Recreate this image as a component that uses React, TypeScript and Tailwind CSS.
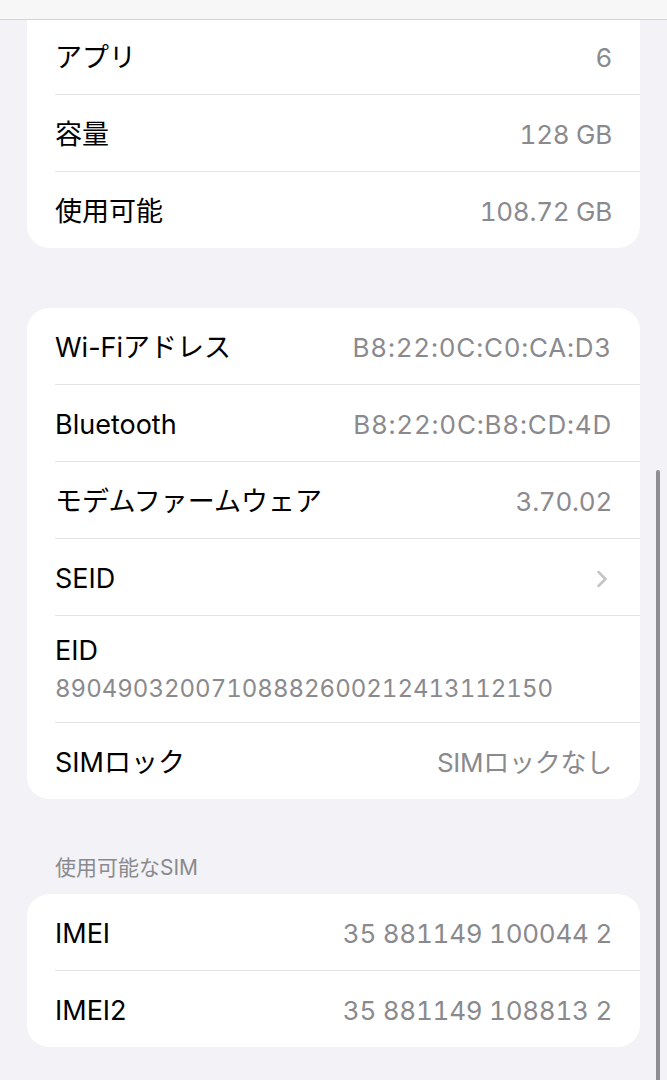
import { ChevronRight } from "lucide-react";

type Row = { label: string; value?: string; chevron?: boolean; mac?: boolean };

const storage: Row[] = [
  { label: "アプリ", value: "6" },
  { label: "容量", value: "128 GB" },
  { label: "使用可能", value: "108.72 GB" },
];

const network: Row[] = [
  { label: "Wi-Fiアドレス", value: "B8:22:0C:C0:CA:D3", mac: true },
  { label: "Bluetooth", value: "B8:22:0C:B8:CD:4D", mac: true },
  { label: "モデムファームウェア", value: "3.70.02" },
  { label: "SEID", chevron: true },
];

const sim: Row[] = [
  { label: "IMEI", value: "35 881149 100044 2" },
  { label: "IMEI2", value: "35 881149 108813 2" },
];

function Divider() {
  return <div className="ml-[28px] h-px bg-[#e3e3e6]" />;
}

function InfoRow({ row }: { row: Row }) {
  return (
    <div className="flex h-[76px] items-center justify-between pl-[28px] pr-[28px] pt-[3px]">
      <span className="text-[27px] leading-[34px] text-black">{row.label}</span>
      {row.chevron ? (
        <ChevronRight className="h-7 w-7 -mr-1 text-[#c4c4c7]" strokeWidth={2.2} />
      ) : (
        <span
          className={
            row.mac
              ? "text-[26px] leading-[34px] tracking-[0.03em] text-[#8a8a8e] tabular-nums"
              : "text-[26px] leading-[34px] tracking-[-0.01em] text-[#8a8a8e] tabular-nums"
          }
        >
          {row.value}
        </span>
      )}
    </div>
  );
}

function Group({ rows }: { rows: Row[] }) {
  return (
    <>
      {rows.map((r, i) => (
        <div key={r.label}>
          {i > 0 && <Divider />}
          <InfoRow row={r} />
        </div>
      ))}
    </>
  );
}

function App() {
  return (
    <div
      className="relative h-[1080px] w-full overflow-hidden bg-[#f2f2f7]"
      style={{ fontFamily: '"Inter", "Noto Sans CJK JP", sans-serif' }}
    >
      <div className="absolute inset-x-0 top-0 z-10 h-5 border-b border-[#d4d4d8] bg-[#f7f7f8]" />

      <div className="mx-[27px] -mt-[2px] rounded-b-[22px] bg-white pt-[20px]">
        <Group rows={storage} />
      </div>

      <div className="mx-[27px] mt-[60px] rounded-[22px] bg-white">
        <Group rows={network} />
        <Divider />
        <div className="flex flex-col pl-[28px] pt-[18px] pb-[15px]">
          <span className="text-[27px] leading-[34px] text-black">EID</span>
          <span className="mt-[2px] text-[24px] leading-[37px] text-[#8a8a8e] tabular-nums">
            89049032007108882600212413112150
          </span>
        </div>
        <Divider />
        <InfoRow row={{ label: "SIMロック", value: "SIMロックなし" }} />
      </div>

      <div className="mt-[55px] pl-[55px] text-[21px] leading-[28px] text-[#8a8a8e]">使用可能なSIM</div>

      <div className="mx-[27px] mt-[12px] rounded-[22px] bg-white">
        <Group rows={sim} />
      </div>

      <div className="absolute right-[7px] top-[470px] h-[620px] w-[4px] rounded-full bg-[#8e8e93]" />
    </div>
  );
}

export default App;
